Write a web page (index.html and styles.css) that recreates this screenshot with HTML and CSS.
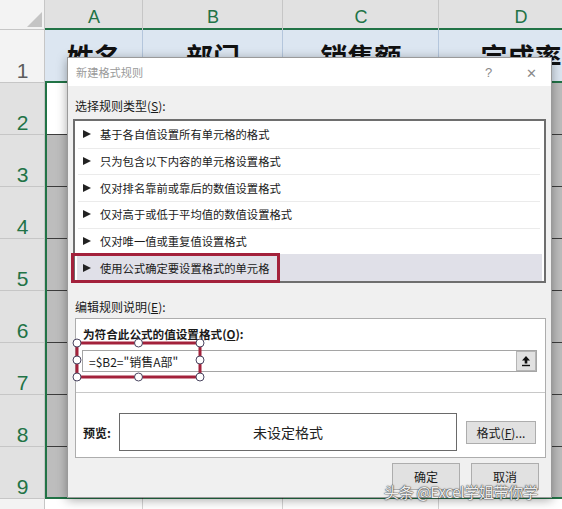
FILE: index.html
```html
<!DOCTYPE html>
<html lang="zh-CN">
<head>
    <meta charset="UTF-8">
    <title>新建格式规则</title>
    <link rel="stylesheet" href="styles.css">
</head>
<body>
    <div class="sheet">
        <div class="corner"></div>
        <div class="colhead">A</div>
        <div class="colhead">B</div>
        <div class="colhead">C</div>
        <div class="colhead">D</div>

        <div class="rowhead plain">1</div>
        <div class="cell head">姓名</div>
        <div class="cell head">部门</div>
        <div class="cell head">销售额</div>
        <div class="cell head">完成率</div>

        <div class="rowhead">2</div>
        <div class="cell active first"></div>
        <div class="cell sel"></div>
        <div class="cell sel"></div>
        <div class="cell sel"></div>

        <div class="rowhead">3</div>
        <div class="cell sel first"></div>
        <div class="cell sel"></div>
        <div class="cell sel"></div>
        <div class="cell sel"></div>

        <div class="rowhead">4</div>
        <div class="cell sel first"></div>
        <div class="cell sel"></div>
        <div class="cell sel"></div>
        <div class="cell sel"></div>

        <div class="rowhead">5</div>
        <div class="cell sel first"></div>
        <div class="cell sel"></div>
        <div class="cell sel"></div>
        <div class="cell sel"></div>

        <div class="rowhead">6</div>
        <div class="cell sel first"></div>
        <div class="cell sel"></div>
        <div class="cell sel"></div>
        <div class="cell sel"></div>

        <div class="rowhead">7</div>
        <div class="cell sel first"></div>
        <div class="cell sel"></div>
        <div class="cell sel"></div>
        <div class="cell sel"></div>

        <div class="rowhead">8</div>
        <div class="cell sel first"></div>
        <div class="cell sel"></div>
        <div class="cell sel"></div>
        <div class="cell sel"></div>

        <div class="rowhead">9</div>
        <div class="cell sel first last"></div>
        <div class="cell sel last"></div>
        <div class="cell sel last"></div>
        <div class="cell sel last"></div>

        <div class="rowhead plain"></div>
        <div class="cell"></div>
        <div class="cell"></div>
        <div class="cell"></div>
        <div class="cell"></div>
    </div>

    <div class="dialog">
        <div class="titlebar">
            <span class="title">新建格式规则</span>
            <span class="help">?</span>
            <span class="close">✕</span>
        </div>
        <div class="dlg-body">
            <div class="label">选择规则类型(<u>S</u>):</div>
            <ul class="rules">
                <li><i class="arrow"></i>基于各自值设置所有单元格的格式</li>
                <li><i class="arrow"></i>只为包含以下内容的单元格设置格式</li>
                <li><i class="arrow"></i>仅对排名靠前或靠后的数值设置格式</li>
                <li><i class="arrow"></i>仅对高于或低于平均值的数值设置格式</li>
                <li><i class="arrow"></i>仅对唯一值或重复值设置格式</li>
                <li class="current"><i class="arrow"></i>使用公式确定要设置格式的单元格<span class="mark"></span></li>
            </ul>

            <div class="label second">编辑规则说明(<u>E</u>):</div>
            <div class="panel">
                <div class="panel-label">为符合此公式的值设置格式(<u>O</u>):</div>
                <div class="formula">
                    <span class="formula-text">=$B2="销售A部"</span>
                    <button class="collapse">
                        <svg width="12" height="12" viewBox="0 0 12 12">
                            <path d="M6 1 L10 5.5 L7.3 5.5 L7.3 8.5 L4.7 8.5 L4.7 5.5 L2 5.5 Z" fill="#111"/>
                            <rect x="2" y="9.8" width="8" height="1.4" fill="#111"/>
                        </svg>
                    </button>
                    <svg class="shape" width="141" height="46" viewBox="0 0 141 46">
                        <rect x="6" y="6" width="123" height="34" fill="none" stroke="#a3213b" stroke-width="3"/>
                        <circle cx="6" cy="6" r="4" fill="#fff" stroke="#4a4560"/>
                        <circle cx="67.5" cy="6" r="4" fill="#fff" stroke="#4a4560"/>
                        <circle cx="129" cy="6" r="4" fill="#fff" stroke="#4a4560"/>
                        <circle cx="6" cy="23" r="4" fill="#fff" stroke="#4a4560"/>
                        <circle cx="129" cy="23" r="4" fill="#fff" stroke="#4a4560"/>
                        <circle cx="6" cy="40" r="4" fill="#fff" stroke="#4a4560"/>
                        <circle cx="67.5" cy="40" r="4" fill="#fff" stroke="#4a4560"/>
                        <circle cx="129" cy="40" r="4" fill="#fff" stroke="#4a4560"/>
                    </svg>
                </div>
                <div class="divider"></div>
                <div class="preview-row">
                    <span class="preview-label">预览:</span>
                    <div class="preview">未设定格式</div>
                    <button class="btn format">格式(<u>F</u>)...</button>
                </div>
            </div>

            <div class="actions">
                <button class="btn">确定</button>
                <button class="btn">取消</button>
            </div>
        </div>
    </div>

    <div class="watermark">头条 @Excel学姐带你学</div>
</body>
</html>
```

FILE: styles.css
```css
* {
    box-sizing: border-box;
}
body {
    margin: 0;
    width: 562px;
    height: 509px;
    overflow: hidden;
    position: relative;
    background: #fff;
    font-family: "Noto Sans CJK SC", sans-serif;
}

/* 表格 */
.sheet {
    display: grid;
    grid-template-columns: 45px 98px 140px 156px 164px;
    grid-template-rows: 30px 53px repeat(8, 52px) 30px;
    width: 603px;
}
.corner {
    background: #f3f3f3;
    position: relative;
    box-shadow: inset -1px -1px 0 #c6c6c6;
}
.corner::after {
    content: "";
    position: absolute;
    right: 3px;
    bottom: 3px;
    border-left: 15px solid transparent;
    border-bottom: 15px solid #c4c4c4;
}
.colhead {
    background: #e1e1e1;
    color: #217346;
    font: 18px "Liberation Sans", sans-serif;
    line-height: 1;
    display: flex;
    justify-content: center;
    align-items: flex-end;
    padding-bottom: 4px;
    box-shadow: inset -1px 0 0 #c6c6c6, inset 0 -2px 0 #217346;
}
.rowhead {
    background: #e1e1e1;
    color: #217346;
    font: 21px "Liberation Sans", sans-serif;
    line-height: 1;
    display: flex;
    justify-content: center;
    align-items: flex-end;
    padding-bottom: 2px;
    box-shadow: inset -1px -1px 0 #c6c6c6;
}
.rowhead.plain {
    background: #f3f3f3;
    color: #5c5c5c;
}
.cell {
    background: #fff;
    box-shadow: inset -1px -1px 0 #d4d4d4;
}
.cell.head {
    background: #dce6f1;
    color: #111;
    font-weight: 700;
    font-size: 27px;
    display: flex;
    justify-content: center;
    align-items: center;
    box-shadow: inset -1px 0 0 #b4c6dc, inset 0 -2px 0 #217346;
}
.cell.sel {
    background: #bdbdbd;
    box-shadow: inset -1px -1px 0 #3c3c3c;
}
.cell.active {
    background: #fff;
    box-shadow: inset 2px 0 0 #217346, inset -1px -1px 0 #3c3c3c;
}
.cell.sel.first {
    box-shadow: inset 2px 0 0 #217346, inset -1px -1px 0 #3c3c3c;
}
.cell.sel.last {
    box-shadow: inset -1px 0 0 #3c3c3c, inset 0 -2px 0 #217346;
}
.cell.sel.first.last {
    box-shadow: inset 2px 0 0 #217346, inset -1px 0 0 #3c3c3c, inset 0 -2px 0 #217346;
}

/* 对话框 */
.dialog {
    position: absolute;
    left: 67px;
    top: 57px;
    width: 485px;
    height: 441px;
    background: #f0f0f0;
    border: 1px solid #9a9a9a;
    box-shadow: 0 2px 10px rgba(0, 0, 0, 0.35);
    font-size: 12px;
    color: #1a1a1a;
}
.titlebar {
    height: 28px;
    background: #fff;
    display: flex;
    align-items: center;
    padding-left: 8px;
    color: #9a9a9a;
}
.title {
    flex: 1;
    font-size: 11.2px;
}
.help {
    width: 14px;
    margin-right: 27px;
    font: 13px "Liberation Sans", sans-serif;
    color: #8a8a8a;
}
.close {
    width: 14px;
    margin-right: 11px;
    font-size: 13px;
    color: #8a8a8a;
}
.dlg-body {
    padding: 12px 5px 0 5px;
}
.label {
    line-height: 16px;
    height: 16px;
    padding-left: 2px;
}
.label.second {
    margin-top: 16px;
}
.rules {
    list-style: none;
    margin: 5px 0 0 0;
    padding: 0;
    height: 164px;
    background: #fff;
    border: 2px solid #6e6e6e;
    display: grid;
    grid-auto-rows: 1fr;
    font-size: 11.3px;
}
.rules li {
    position: relative;
    display: flex;
    align-items: center;
    padding-left: 8px;
    gap: 9px;
}
.rules li + li::before {
    content: "";
    position: absolute;
    left: 3px;
    right: 4px;
    top: 0;
    border-top: 1px solid #ebebeb;
}
.rules li.current {
    background: #e0e0e8;
    margin: 0 2px;
    padding-left: 6px;
}
.rules li.current::before {
    display: none;
}
.arrow {
    width: 0;
    height: 0;
    border-left: 8px solid #222;
    border-top: 4.5px solid transparent;
    border-bottom: 4.5px solid transparent;
}
.mark {
    position: absolute;
    left: -6px;
    top: -1px;
    width: 209px;
    height: 30px;
    border: 3px solid #a3213b;
}
.panel {
    margin: 3px 0 0 2px;
    height: 140px;
    background: #fff;
    border: 1px solid #adadad;
    padding-top: 7px;
}
.panel-label {
    font-weight: 700;
    font-size: 11.6px;
    line-height: 16px;
    padding-left: 7px;
}
.formula {
    position: relative;
    margin: 8px 8px 0 6px;
    height: 22px;
    border: 1px solid #a5a5a5;
    display: flex;
    align-items: center;
    justify-content: space-between;
    padding-left: 6px;
}
.formula-text {
    font-size: 12px;
}
.collapse {
    width: 20px;
    height: 20px;
    padding: 0;
    background: #e1e1e1;
    border: 1px solid #b5b5b5;
    display: flex;
    align-items: center;
    justify-content: center;
}
.shape {
    position: absolute;
    left: -12px;
    top: -14px;
}
.divider {
    margin-top: 20px;
    border-top: 1px solid #c8c8c8;
}
.preview-row {
    display: flex;
    align-items: center;
    margin-top: 20px;
    padding-left: 7px;
}
.preview-label {
    width: 36px;
    font-weight: 700;
}
.preview {
    width: 338px;
    height: 38px;
    border: 1px solid #6a6a6a;
    display: flex;
    align-items: center;
    justify-content: center;
    font-size: 14px;
    color: #222;
}
.btn {
    font-family: "Noto Sans CJK SC", sans-serif;
    font-size: 12px;
    color: #1a1a1a;
    background: #e1e1e1;
    border: 1px solid #adadad;
    padding: 0;
}
.btn.format {
    width: 70px;
    height: 23px;
    margin-left: 9px;
}
.actions {
    display: flex;
    justify-content: flex-end;
    gap: 11px;
    margin-top: 5px;
    padding-right: 7px;
}
.actions .btn {
    width: 68px;
    height: 27px;
}

.watermark {
    position: absolute;
    left: 384px;
    top: 481px;
    font-size: 15px;
    color: rgba(255, 255, 255, 0.92);
    text-shadow: 0 0 1px #444, 0 0 1px #444, 0 0 2px #666;
    letter-spacing: -0.3px;
}
```
